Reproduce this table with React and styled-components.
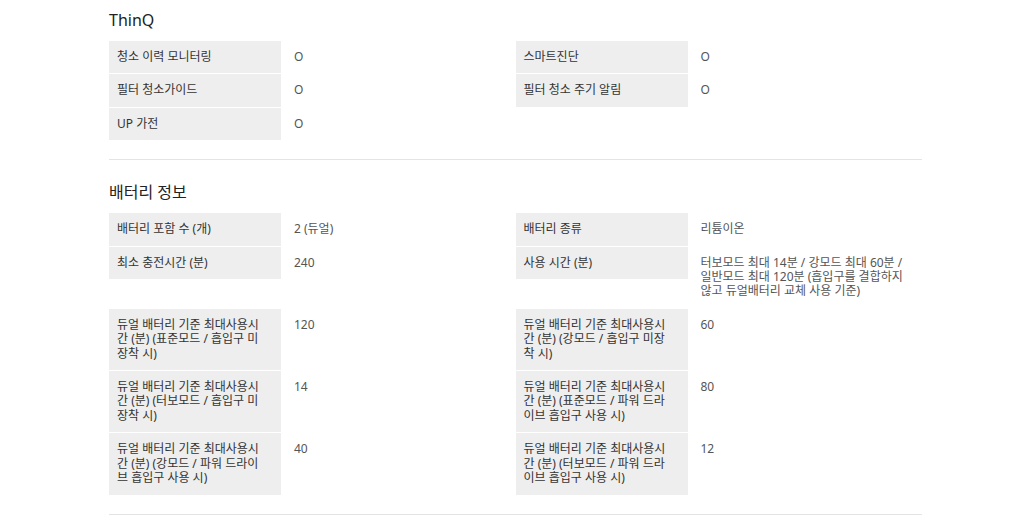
import React from 'react';
import styled, { createGlobalStyle } from "styled-components";

const GlobalStyle = createGlobalStyle`
  body {
    margin: 0;
    background: #fff;
    font-family: "Noto Sans", "Noto Sans CJK KR", sans-serif;
  }
`;

const Page = styled.div`
  width: 813px;
  margin-left: 109px;
  padding-top: 9px;
`;

const Section = styled.section`
  padding-bottom: 19px;
  border-bottom: 1px solid #e4e4e4;
  & + & {
    padding-top: 21px;
  }
`;

const Title = styled.h3`
  margin: 0 0 10px;
  font-size: 16px;
  line-height: 22px;
  font-weight: 400;
  color: #222;
`;

const Specs = styled.dl`
  display: grid;
  grid-template-columns: 1fr 1fr;
  row-gap: 1px;
  margin: 0;
  align-items: start;
`;

const Item = styled.div`
  display: flex;
  align-items: flex-start;
`;

const Label = styled.dt`
  flex: 0 0 172px;
  box-sizing: border-box;
  padding: 9px 18px 9px 8px;
  background: #eeeeee;
  color: #333;
  font-size: 12px;
  line-height: 14.4px;
`;

const Value = styled.dd`
  flex: 1;
  margin: 0;
  padding: 9px 10px 9px 13px;
  color: #555;
  font-size: 12px;
  line-height: 14.4px;
`;

const thinq = [
  ["청소 이력 모니터링", "O"],
  ["스마트진단", "O"],
  ["필터 청소가이드", "O"],
  ["필터 청소 주기 알림", "O"],
  ["UP 가전", "O"],
];

const battery = [
  ["배터리 포함 수 (개)", "2 (듀얼)"],
  ["배터리 종류", "리튬이온"],
  ["최소 충전시간 (분)", "240"],
  ["사용 시간 (분)", "터보모드 최대 14분 / 강모드 최대 60분 / 일반모드 최대 120분 (흡입구를 결합하지 않고 듀얼배터리 교체 사용 기준)"],
  ["듀얼 배터리 기준 최대사용시간 (분) (표준모드 / 흡입구 미장착 시)", "120"],
  ["듀얼 배터리 기준 최대사용시간 (분) (강모드 / 흡입구 미장착 시)", "60"],
  ["듀얼 배터리 기준 최대사용시간 (분) (터보모드 / 흡입구 미장착 시)", "14"],
  ["듀얼 배터리 기준 최대사용시간 (분) (표준모드 / 파워 드라이브 흡입구 사용 시)", "80"],
  ["듀얼 배터리 기준 최대사용시간 (분) (강모드 / 파워 드라이브 흡입구 사용 시)", "40"],
  ["듀얼 배터리 기준 최대사용시간 (분) (터보모드 / 파워 드라이브 흡입구 사용 시)", "12"],
];

function SpecTable({ rows }) {
  return (
    <Specs>
      {rows.map(([k, v]) => (
        <Item key={k}>
          <Label>{k}</Label>
          <Value>{v}</Value>
        </Item>
      ))}
    </Specs>
  );
}

export default function App() {
  return (
    <Page>
      <GlobalStyle />
      <Section>
        <Title>ThinQ</Title>
        <SpecTable rows={thinq} />
      </Section>
      <Section>
        <Title>배터리 정보</Title>
        <SpecTable rows={battery} />
      </Section>
    </Page>
  );
}
